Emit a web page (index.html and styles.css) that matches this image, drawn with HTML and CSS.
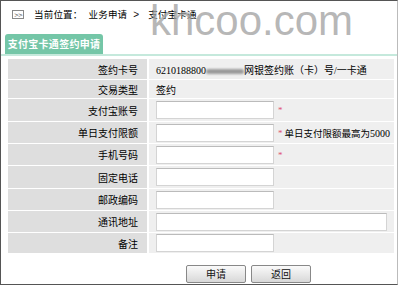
FILE: index.html
```html
<!DOCTYPE html>
<html>
<head>
<meta charset="utf-8">
<link rel="stylesheet" href="styles.css">
</head>
<body>
<div class="frame">
  <div class="crumb">
    <span class="crumb-icon">&gt;&gt;</span>
    <span class="crumb-text">当前位置：</span>
    <span class="crumb-text">业务申请</span>
    <span class="crumb-sep">&gt;</span>
    <span class="crumb-text">支付宝卡通</span>
  </div>
  <div class="tabbar"><div class="tab">支付宝卡通签约申请</div></div>
  <table class="form">
    <colgroup><col class="c1"><col class="c2"></colgroup>
    <tr class="r1"><td class="lab">签约卡号</td><td class="val"><span class="num">6210188800</span><span class="blur"></span>网银签约账（卡）号/一卡通</td></tr>
    <tr class="r2"><td class="lab">交易类型</td><td class="val">签约</td></tr>
    <tr class="rt"><td class="lab">支付宝账号</td><td class="val"><span class="inp"></span><span class="star">*</span></td></tr>
    <tr><td class="lab">单日支付限额</td><td class="val"><span class="inp"></span><span class="star">*</span><span class="note">单日支付限额最高为<span class="num">5000</span></span></td></tr>
    <tr><td class="lab">手机号码</td><td class="val"><span class="inp"></span><span class="star">*</span></td></tr>
    <tr class="rt"><td class="lab">固定电话</td><td class="val"><span class="inp"></span></td></tr>
    <tr><td class="lab">邮政编码</td><td class="val"><span class="inp"></span></td></tr>
    <tr><td class="lab">通讯地址</td><td class="val"><span class="inp wide"></span></td></tr>
    <tr class="rs"><td class="lab">备注</td><td class="val"><span class="inp"></span></td></tr>
  </table>
  <div class="actions">
    <button class="btn">申请</button>
    <button class="btn">返回</button>
  </div>
  <div class="watermark">khcoo.com</div>
</div>
</body>
</html>
```
FILE: styles.css
```css
html, body { margin: 0; padding: 0; background: #fff; }
body {
  font-family: "Liberation Serif", "Noto Sans CJK SC", serif;
  font-size: 10px;
  color: #111;
}
.frame {
  position: relative;
  width: 398px;
  height: 285px;
  box-sizing: border-box;
  border-top: 1px solid #555;
  border-left: 1px solid #555;
  border-right: 1px solid #bbb;
  border-bottom: 1px solid #555;
  overflow: hidden;
}
.crumb {
  display: flex;
  align-items: center;
  height: 26px;
  padding-left: 11px;
  gap: 6px;
}
.crumb-icon {
  display: inline-block;
  width: 10px;
  height: 7px;
  border: 1px solid #888;
  font-family: "DejaVu Sans", sans-serif;
  font-size: 6px;
  line-height: 7px;
  text-align: center;
  color: #444;
  letter-spacing: -1px;
  margin-right: 4px;
}
.crumb-text {
  font-family: "Noto Sans CJK SC", sans-serif;
  font-size: 9.5px;
  letter-spacing: 0.2px;
  color: #000;
}
.crumb-sep { font-family: "Liberation Sans", sans-serif; font-size: 10px; margin-right: 3px; }
.tabbar {
  margin-top: 7px;
  padding-left: 4px;
  border-bottom: 2px solid #c5e9dc;
  height: 20px;
}
.tab {
  display: inline-block;
  width: 98px;
  height: 20px;
  line-height: 20px;
  background: #74c6a7;
  color: #fff;
  font-family: "Noto Sans CJK SC", sans-serif;
  font-weight: bold;
  font-size: 10px;
  letter-spacing: 0.3px;
  white-space: nowrap;
  border-radius: 3px 3px 0 0;
  text-align: center;
}
.form {
  margin: 2px 0 0 6px;
  width: 388px;
  table-layout: fixed;
  border-collapse: separate;
  border-spacing: 1px;
}
.c1 { width: 140px; }
.form td { height: 21px; padding: 0; }
.form tr.rt td { height: 22px; }
.form tr.rs td { height: 20px; }
.form tr.r1 td { height: 20px; }
.form tr.r2 td { height: 18px; }
.lab {
  background: #dedede;
  text-align: right;
  padding-right: 9px !important;
  font-family: "Noto Sans CJK SC", sans-serif;
  border-right: 1px solid #fff;
  color: #000;
}
.val {
  background: #efefef;
  padding-left: 7px !important;
  white-space: nowrap;
  overflow: hidden;
  font-family: "Liberation Serif", "Noto Sans CJK SC", serif;
  color: #000;
}
.inp {
  display: inline-block;
  vertical-align: middle;
  width: 116px;
  height: 16px;
  background: #fff;
  border: 1px solid #d4d4d4;
  border-top-color: #bbb;
}
.inp.wide { width: 229px; }
.star {
  color: #e05070;
  font-size: 9px;
  margin-left: 4px;
  vertical-align: middle;
}
.note {
  font-size: 9.5px;
  margin-left: 2px;
  vertical-align: middle;
}
.num { font-family: "Liberation Serif", serif; font-size: 10px; }
.blur {
  display: inline-block;
  width: 38px;
  height: 5px;
  background: #9a9a9a;
  border-radius: 3px;
  filter: blur(1.2px);
  vertical-align: middle;
}
.actions {
  display: flex;
  gap: 5px;
  padding-left: 185px;
  margin-top: 11px;
}
.btn {
  width: 60px;
  height: 18px;
  padding: 0;
  border: 1px solid #888;
  border-radius: 2px;
  background: linear-gradient(#fafafa, #d8d8d8);
  font-family: "Noto Sans CJK SC", sans-serif;
  font-size: 10px;
  line-height: 16px;
  color: #111;
}
.watermark {
  position: absolute;
  left: 149px;
  top: -4px;
  font-family: "Liberation Sans", sans-serif;
  font-size: 42px;
  color: rgba(160, 160, 160, 0.75);
  pointer-events: none;
}
```
